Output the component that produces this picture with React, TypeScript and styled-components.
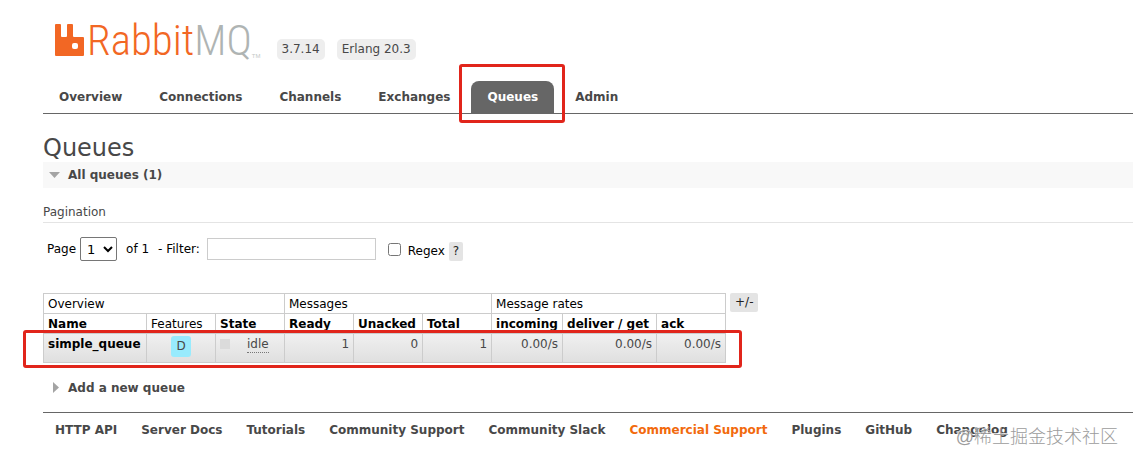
import React from 'react';
import styled, { createGlobalStyle } from 'styled-components';

const GlobalStyle = createGlobalStyle`
  *, *::before, *::after { box-sizing: border-box; }
  body {
    margin: 0;
    background: #fff;
    color: #484848;
    font: 12px/16px Verdana, "DejaVu Sans", sans-serif;
  }
`;

const Page = styled.div`
  position: relative;
  padding: 16px 0 12px 43px;
`;

const Header = styled.header`
  display: flex;
  align-items: flex-end;
  height: 48px;
  padding: 0 0 4px 12px;
`;

const Logo = styled.a`
  display: flex;
  align-items: flex-start;
  height: 44px;
  margin-right: 16px;
  color: #f26724;
  text-decoration: none;
`;

const LogoMark = styled.svg`
  width: 30px;
  height: 32px;
  margin-top: 8px;
`;

const LogoText = styled.span`
  padding-left: 2px;
  font: 300 43px/48px "Roboto Condensed", Roboto, sans-serif;
  font-stretch: condensed;
`;

const LogoGrey = styled.span`
  color: #afb4b3;
`;

const Trademark = styled.span`
  align-self: flex-end;
  color: #c4c8c7;
  font: 6px/8px "Liberation Sans", sans-serif;
`;

const Version = styled.span`
  margin-right: 12px;
  padding: 2px 5px;
  border-radius: 5px;
  background: #eee;
  line-height: 17px;
`;

const Tabs = styled.nav`
  display: flex;
  align-items: flex-end;
  gap: 5px;
  height: 50px;
  border-bottom: 1px solid #666;
`;

const Tab = styled.a<{ $active?: boolean }>`
  position: relative;
  padding: 8px 16px;
  border-radius: 8px 8px 0 0;
  background: ${p => (p.$active ? '#666' : 'transparent')};
  color: ${p => (p.$active ? '#fff' : '#484848')};
  font-weight: bold;
  text-decoration: none;
`;

const TabMarker = styled.span`
  position: absolute;
  inset: -17px -11px -10px -12px;
  border: 3px solid #e1251b;
  border-radius: 3px;
`;

const Title = styled.h1`
  margin: 20px 0 0;
  font-size: 24px;
  line-height: 28px;
  font-weight: normal;
`;

const SectionToggle = styled.button<{ $shaded?: boolean }>`
  display: flex;
  align-items: center;
  gap: 8px;
  width: 100%;
  height: 26px;
  padding: 0 5px;
  border: 0;
  background: ${p => (p.$shaded ? '#f8f8f8' : 'transparent')};
  color: #484848;
  font: bold 12px/16px Verdana, "DejaVu Sans", sans-serif;
  text-align: left;
`;

const Arrow = styled.svg`
  width: 12px;
  height: 12px;
  fill: #a4a4a4;
`;

const Subheading = styled.h2`
  margin: 16px 0 0;
  padding-bottom: 1px;
  border-bottom: 1px solid #e4e4e4;
  font-size: 12px;
  line-height: 17px;
  font-weight: normal;
`;

const Filters = styled.form`
  display: flex;
  align-items: center;
  height: 26px;
  margin-top: 13px;
  padding-left: 4px;
  color: #000;
`;

const PageSelect = styled.select`
  width: 37px;
  height: 24px;
  margin: 0 9px 0 4px;
  padding: 0 0 0 2px;
  border: 1px solid #767676;
  border-radius: 2px;
  background: #fff;
  color: #000;
  font: 13px "DejaVu Sans", sans-serif;
`;

const FilterLabel = styled.label`
  margin-left: 9px;
`;

const FilterInput = styled.input`
  width: 169px;
  height: 22px;
  margin: 0 12px 0 7px;
  border: 1px solid #ccc;
  background: #fff;
`;

const Checkbox = styled.input`
  width: 13px;
  height: 13px;
  margin: 0 7px 0 0;
`;

const RegexLabel = styled.label`
  padding-top: 3px;
`;

const SmallButton = styled.button`
  height: 19px;
  padding: 0 5px;
  border: 0;
  border-radius: 2px;
  background: #e4e4e4;
  color: #222;
  font: 12px/19px Verdana, "DejaVu Sans", sans-serif;
`;

const HelpButton = styled(SmallButton)`
  margin: 4px 0 0 4px;
  padding: 0 4px;
`;

const TableArea = styled.div`
  display: flex;
  align-items: flex-start;
  gap: 4px;
  margin-top: 31px;
`;

const TableFrame = styled.div`
  position: relative;
`;

const RowMarker = styled.div`
  position: absolute;
  inset: auto -16px -5px -20px;
  height: 38px;
  border: 3px solid #e1251b;
  border-radius: 3px;
`;

const Table = styled.table`
  width: 683px;
  table-layout: fixed;
  border-collapse: collapse;
`;

const Column = styled.col<{ $width: number }>`
  width: ${p => p.$width}px;
`;

const Head = styled.th<{ $plain?: boolean }>`
  height: 20px;
  padding: 1px 4px;
  border: 1px solid #ccc;
  color: #000;
  font-weight: ${p => (p.$plain ? 'normal' : 'bold')};
  text-align: left;
  white-space: nowrap;
`;

const DataRow = styled.tr`
  background: linear-gradient(#f0f0f0, #dfdfdf);
`;

const Cell = styled.td<{ $align?: string }>`
  height: 29px;
  padding: 2px 4px;
  border: 1px solid #ccc;
  text-align: ${p => p.$align || 'right'};
  vertical-align: top;
  white-space: nowrap;
`;

const QueueLink = styled.a`
  color: #000;
  font-weight: bold;
  text-decoration: none;
`;

const Feature = styled.span`
  display: inline-block;
  padding: 2px 5px;
  border-radius: 3px;
  background: #98ebfd;
  line-height: 17px;
`;

const State = styled.div`
  display: flex;
  align-items: flex-start;
  gap: 17px;
`;

const StateDot = styled.span`
  width: 10px;
  height: 10px;
  margin-top: 3px;
  background: #dbdbdb;
`;

const StateText = styled.abbr`
  border-bottom: 1px dotted #777;
  line-height: 16px;
  text-decoration: none;
`;

const AddSection = styled.div`
  margin-top: 12px;
`;

const Footer = styled.footer`
  display: flex;
  gap: 24px;
  margin-top: 11px;
  padding: 9px 12px;
  border-top: 1px solid #666;
`;

const FooterLink = styled.a<{ $accent?: boolean }>`
  color: ${p => (p.$accent ? '#f26a0d' : '#484848')};
  font-weight: bold;
  text-decoration: none;
  white-space: nowrap;
`;

const Watermark = styled.div`
  position: absolute;
  right: 15px;
  bottom: 10px;
  color: #9c9c9c;
  font: 300 18px/24px "Liberation Sans", "Noto Sans CJK SC", sans-serif;
  text-shadow: -1px -1px #fffc;
  pointer-events: none;
`;

const tabs = ['Overview', 'Connections', 'Channels', 'Exchanges', 'Queues', 'Admin'];
const columns = ['Name', 'Features', 'State', 'Ready', 'Unacked', 'Total', 'incoming', 'deliver / get', 'ack'];
const columnWidths = [103, 69, 69, 69, 69, 69, 71, 94, 69];
const values = ['1', '0', '1', '0.00/s', '0.00/s', '0.00/s'];
const footerLinks = [
  'HTTP API', 'Server Docs', 'Tutorials', 'Community Support', 'Community Slack',
  'Commercial Support', 'Plugins', 'GitHub', 'Changelog',
];

export default function App() {
  return (
    <>
      <GlobalStyle />
      <Page>
        <Header>
          <Logo href="#">
            <LogoMark viewBox="0 0 30 32" aria-hidden="true">
              <path
                fill="currentColor"
                fillRule="evenodd"
                d="M1 0H5Q6 0 6 1V12Q6 13 7 13H11Q12 13 12 12V1Q12 0 13 0H17Q18 0 18 1V12Q18 13 19 13H28Q29 13 29 14V31Q29 32 28 32H1Q0 32 0 31V1Q0 0 1 0ZM19 19Q17 19 17 21V23Q17 25 19 25H21Q23 25 23 23V21Q23 19 21 19Z"
              />
            </LogoMark>
            <LogoText>Rabbit<LogoGrey>MQ</LogoGrey></LogoText>
            <Trademark>TM</Trademark>
          </Logo>
          <Version>3.7.14</Version>
          <Version>Erlang 20.3</Version>
        </Header>

        <Tabs>
          {tabs.map(name => (
            <Tab key={name} href="#" $active={name === 'Queues'}>
              {name}
              {name === 'Queues' && <TabMarker />}
            </Tab>
          ))}
        </Tabs>

        <main>
          <Title>Queues</Title>
          <SectionToggle type="button" $shaded>
            <Arrow viewBox="0 0 12 12"><path d="M1 3H12L6.500 9Z" /></Arrow>
            All queues (1)
          </SectionToggle>
          <Subheading>Pagination</Subheading>

          <Filters>
            <label htmlFor="page">Page</label>
            <PageSelect id="page" defaultValue="1"><option>1</option></PageSelect>
            <span>of 1</span>
            <FilterLabel htmlFor="filter">- Filter:</FilterLabel>
            <FilterInput id="filter" type="text" />
            <Checkbox id="regex" type="checkbox" />
            <RegexLabel htmlFor="regex">Regex</RegexLabel>
            <HelpButton type="button">?</HelpButton>
          </Filters>

          <TableArea>
            <TableFrame>
              <Table>
                <colgroup>
                  {columnWidths.map((width, i) => <Column key={i} $width={width} />)}
                </colgroup>
                <thead>
                  <tr>
                    <Head $plain colSpan={3}>Overview</Head>
                    <Head $plain colSpan={3}>Messages</Head>
                    <Head $plain colSpan={3}>Message rates</Head>
                  </tr>
                  <tr>
                    {columns.map(name => (
                      <Head key={name} $plain={name === 'Features'}>{name}</Head>
                    ))}
                  </tr>
                </thead>
                <tbody>
                  <DataRow>
                    <Cell $align="left"><QueueLink href="#">simple_queue</QueueLink></Cell>
                    <Cell $align="center"><Feature>D</Feature></Cell>
                    <Cell $align="left">
                      <State><StateDot /><StateText>idle</StateText></State>
                    </Cell>
                    {values.map((value, i) => <Cell key={i}>{value}</Cell>)}
                  </DataRow>
                </tbody>
              </Table>
              <RowMarker />
            </TableFrame>
            <SmallButton type="button">+/-</SmallButton>
          </TableArea>

          <AddSection>
            <SectionToggle type="button">
              <Arrow viewBox="0 0 12 12"><path d="M5 0L11 5.500L5 11Z" /></Arrow>
              Add a new queue
            </SectionToggle>
          </AddSection>
        </main>

        <Footer>
          {footerLinks.map(name => (
            <FooterLink key={name} href="#" $accent={name === 'Commercial Support'}>{name}</FooterLink>
          ))}
        </Footer>
        <Watermark>@稀土掘金技术社区</Watermark>
      </Page>
    </>
  );
}
